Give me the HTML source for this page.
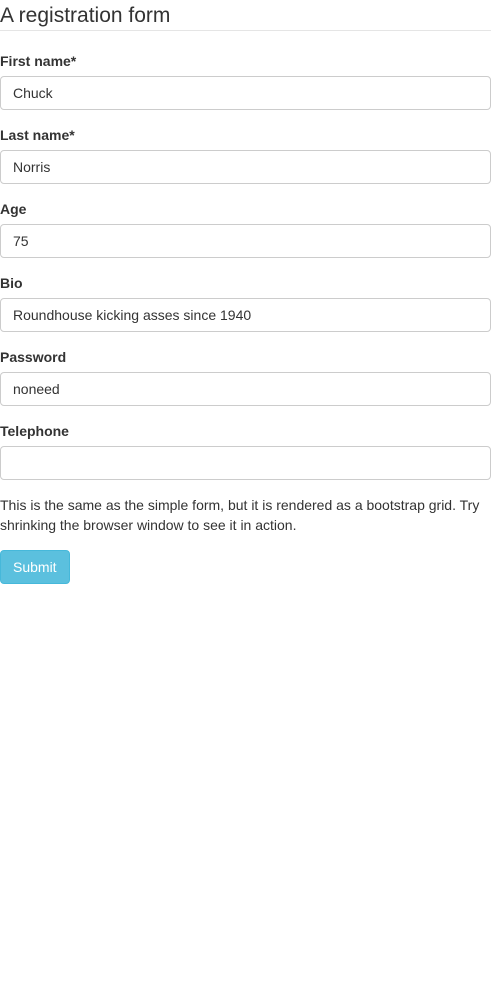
<!DOCTYPE html>
<html><head><style>
body{margin:0;font-family:"Liberation Sans",sans-serif;font-size:14px;color:#333;background:#fff;width:491px;}
h1{font-size:21px;font-weight:normal;margin:0;padding:4px 0 4px 0;line-height:24px;border-bottom:1px solid #e5e5e5;height:22px;}
label{display:block;font-weight:bold;margin:0 0 5px;line-height:20px;}
.g{margin-bottom:15px;}
.i{box-sizing:border-box;height:34px;border:1px solid #ccc;border-radius:4px;padding:7px 12px;line-height:18px;width:491px;}
p{margin:0 0 15px;line-height:20px;}
.b{display:inline-block;background:#5bc0de;border:1px solid #46b8da;color:#fff;border-radius:4px;padding:6px 12px;line-height:20px;}
</style></head><body>
<h1>A registration form</h1>
<div style="height:20px"></div>
<div class="g"><label>First name*</label><div class="i">Chuck</div></div>
<div class="g"><label>Last name*</label><div class="i">Norris</div></div>
<div class="g"><label>Age</label><div class="i">75</div></div>
<div class="g"><label>Bio</label><div class="i">Roundhouse kicking asses since 1940</div></div>
<div class="g"><label>Password</label><div class="i">noneed</div></div>
<div class="g"><label>Telephone</label><div class="i"></div></div>
<p>This is the same as the simple form, but it is rendered as a bootstrap grid. Try shrinking the browser window to see it in action.</p>
<span class="b">Submit</span>
</body></html>
